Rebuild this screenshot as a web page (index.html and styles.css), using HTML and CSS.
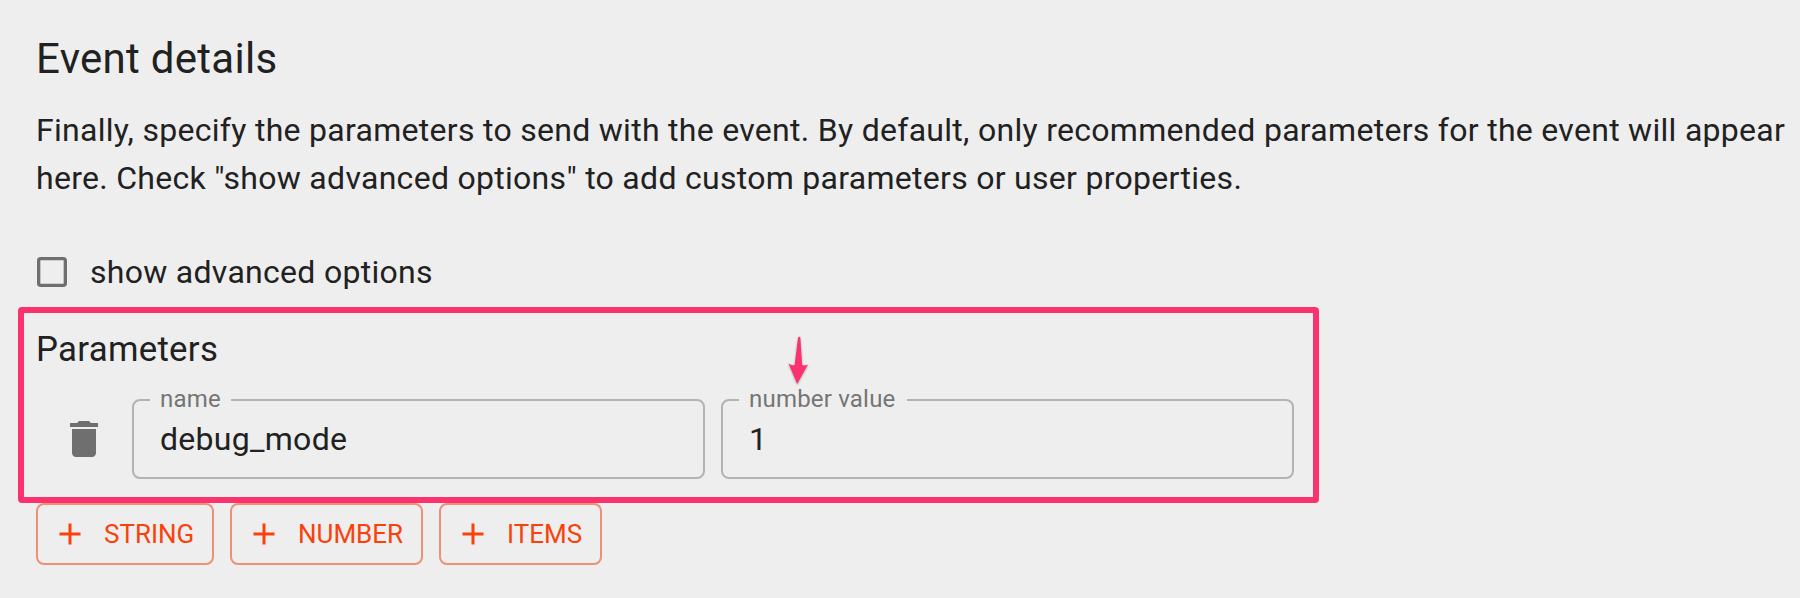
FILE: index.html
```html
<!DOCTYPE html>
<html lang="en">
<head>
<meta charset="utf-8">
<title>Event details</title>
<link rel="stylesheet" href="styles.css">
</head>
<body>
<main class="page">
  <h2 class="title">Event details</h2>
  <p class="intro">Finally, specify the parameters to send with the event. By default, only recommended parameters for the event will appear<br>here. Check "show advanced options" to add custom parameters or user properties.</p>
  <label class="option">
    <svg class="checkbox" viewBox="0 0 24 24"><path d="M19 5v14H5V5h14m0-2H5c-1.1 0-2 .9-2 2v14c0 1.1.9 2 2 2h14c1.1 0 2-.9 2-2V5c0-1.1-.9-2-2-2z"/></svg>
    <span class="option-text">show advanced options</span>
  </label>
  <section class="parameters">
    <h3 class="subtitle">Parameters</h3>
    <div class="row">
      <svg class="trash" viewBox="0 0 24 24"><path d="M6 19c0 1.1.9 2 2 2h8c1.1 0 2-.9 2-2V7H6v12zM19 4h-3.5l-1-1h-5l-1 1H5v2h14V4z"/></svg>
      <fieldset class="field"><legend class="legend legend-name">name</legend><span class="value">debug_mode</span></fieldset>
      <fieldset class="field"><legend class="legend legend-value">number value</legend><span class="value">1</span></fieldset>
    </div>
    <svg class="arrow" viewBox="0 0 26 54"><path d="M12.1 3.5Q13.2 2.2 14.3 3.5L16.2 31Q18.500 32 22 30.500L11.200 50L2.500 29.500Q6 32 8.600 31Z"/></svg>
  </section>
  <div class="actions">
    <button class="add add-string"><svg class="plus" viewBox="0 0 24 24"><path d="M19 13h-6v6h-2v-6H5v-2h6V5h2v6h6v2z"/></svg>STRING</button>
    <button class="add add-number"><svg class="plus" viewBox="0 0 24 24"><path d="M19 13h-6v6h-2v-6H5v-2h6V5h2v6h6v2z"/></svg>NUMBER</button>
    <button class="add add-items"><svg class="plus" viewBox="0 0 24 24"><path d="M19 13h-6v6h-2v-6H5v-2h6V5h2v6h6v2z"/></svg>ITEMS</button>
  </div>
</main>
</body>
</html>
```
FILE: styles.css
```css
* { box-sizing: border-box; }
body {
  margin: 0;
  background: #eee;
  color: #212121;
  font-family: Roboto, sans-serif;
  font-size: 32px;
  letter-spacing: 0.288px;
}
.page {
  height: 598px;
  padding: 31px 0 0 18px;
  overflow: hidden;
}
.title {
  margin: 0 0 19px 18px;
  font-size: 42px;
  font-weight: 400;
  line-height: 56px;
}
.intro {
  margin: 0 0 46px 18px;
  line-height: 48px;
  white-space: nowrap;
}
.option {
  display: flex;
  align-items: center;
  height: 48px;
  margin: 0 0 11px 14px;
}
.checkbox {
  width: 40px;
  height: 40px;
  margin-right: 18px;
  fill: #6f6f6f;
}
.parameters {
  position: relative;
  width: 1301px;
  height: 196px;
  padding: 14px 19px 0 12px;
  border: 6px solid #fb326e;
  border-radius: 4px;
}
.subtitle {
  margin: 0 0 12px;
  font-size: 34.8px;
  font-weight: 400;
  line-height: 44px;
}
.row {
  display: flex;
  height: 92px;
}
.trash {
  width: 48px;
  height: 48px;
  margin: 32px 24px 0;
  fill: #6f6f6f;
}
.field {
  width: 573px;
  min-width: 0;
  height: 96px;
  margin: 0 16px 0 0;
  padding: 0 26px;
  border: 2px solid #b3b3b3;
  border-radius: 8px;
}
.field:last-child { margin-right: 0; }
.legend {
  margin-left: -10px;
  padding: 0 0 2px 10px;
  color: #757575;
  font-size: 24px;
  line-height: 32px;
  letter-spacing: 0.2px;
}
.legend-name { width: 81px; }
.legend-value { width: 168px; }
.value {
  display: block;
  margin-top: -2px;
  line-height: 48px;
}
.arrow {
  position: absolute;
  left: 762px;
  top: 21px;
  width: 26px;
  height: 54px;
  fill: #fb326e;
  filter: drop-shadow(0 1px 1px rgba(0, 0, 0, 0.3));
}
.actions {
  display: flex;
  gap: 16px;
  padding-left: 18px;
}
.add {
  display: flex;
  align-items: center;
  height: 62px;
  padding: 0 0 0 14px;
  background: none;
  border: 2px solid rgba(240, 65, 20, 0.55);
  border-radius: 8px;
  color: #f9410b;
  font: 26px/44px Roboto, sans-serif;
  letter-spacing: 0;
}
.add-string { width: 178px; }
.add-number { width: 193px; }
.add-items { width: 163px; }
.plus {
  width: 36px;
  height: 36px;
  margin-right: 16px;
  fill: currentColor;
}
```
